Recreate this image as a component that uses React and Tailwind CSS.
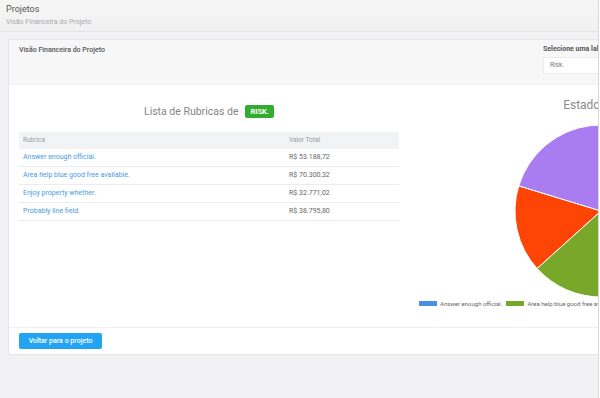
import React from 'react';

const rows = [
  { name: 'Answer enough official.', value: 'R$ 53.188,72' },
  { name: 'Area help blue good free available.', value: 'R$ 70.300,32' },
  { name: 'Enjoy property whether.', value: 'R$ 32.771,02' },
  { name: 'Probably line field.', value: 'R$ 38.795,80' },
];

const slices = [
  { from: 138, to: 197, color: '#ff4506' },
  { from: 197, to: 330, color: '#a97cf2' },
  { from: 330, to: 400, color: '#4a8fe2' },
  { from: 40, to: 138, color: '#79a72a' },
];

const arc = (cx, cy, r, a0, a1) => {
  const p = (a) => [cx + r * Math.cos((a * Math.PI) / 180), cy + r * Math.sin((a * Math.PI) / 180)];
  const [x0, y0] = p(a0);
  const [x1, y1] = p(a1);
  const large = a1 - a0 > 180 ? 1 : 0;
  return `M${cx} ${cy} L${x0} ${y0} A${r} ${r} 0 ${large} 1 ${x1} ${y1} Z`;
};

const Pie = () => (
  <svg width="174" height="174" viewBox="0 0 174 174" className="block">
    {slices.map((s, i) => (
      <path key={i} d={arc(87, 87, 86, s.from, s.to)} fill={s.color} stroke="#fff" strokeWidth="1" />
    ))}
  </svg>
);

export default function App() {
  return (
    <div className="flex w-[600px] h-[398px] overflow-hidden bg-[#f2f2f5] font-['Roboto',sans-serif]">
      <div className="w-[598px] shrink-0 overflow-hidden">
        <div className="h-[32px] bg-gradient-to-b from-[#f6f6f6] to-[#f1f1f1] border-b border-[#e4e4e6] px-[6px] pt-[3px]">
          <div className="text-[9px] text-[#555] leading-[12px]">Projetos</div>
          <div className="text-[7px] text-[#a9a9ae] leading-[10px] mt-[2px]">Visão Financeira do Projeto</div>
        </div>

        <div className="pt-[7px] pl-[8px]">
          <div className="w-[790px] bg-white border border-[#e6e6ea]">
            <div className="h-[45px] bg-[#f7f7f8] flex border-b border-[#f0f0f2]">
              <div className="flex-1 pl-[10px] pt-[5px] text-[7px] font-medium text-[#555]">Visão Financeira do Projeto</div>
              <div className="w-[244px] mr-[10px] pt-[4px]">
                <div className="text-[7px] font-bold text-[#555] leading-[10px]">Selecione uma label</div>
                <div className="mt-[3px] h-[17px] bg-white border border-[#ececef] flex items-center pl-[6px] text-[6.5px] text-[#777]">Risk.</div>
              </div>
            </div>

            <div className="h-[242px] flex pl-[10px]">
              <div className="w-[380px] shrink-0">
                <div className="h-[47px] flex items-center justify-center gap-[7px] pt-[6px]">
                  <span className="text-[10.5px] text-[#858585]">Lista de Rubricas de</span>
                  <span className="bg-[#33ad2f] text-white text-[7.5px] font-bold px-[5px] py-[2px] rounded-[2px] leading-[9px]">RISK.</span>
                </div>
                <div className="text-[7px]">
                  <div className="flex h-[17px] items-center bg-[#f2f3f5] text-[6.5px] text-[#9a9aa0]">
                    <div className="w-[266px] pl-[4px]">Rubrica</div>
                    <div className="pl-[4px]">Valor Total</div>
                  </div>
                  {rows.map((r) => (
                    <div key={r.name} className="flex h-[18px] items-center border-b border-[#ececee]">
                      <div className="w-[266px] pl-[4px] text-[#4a9be2]">{r.name}</div>
                      <div className="pl-[4px] text-[#666]">{r.value}</div>
                    </div>
                  ))}
                </div>
              </div>

              <div className="w-[384px] shrink-0 ml-[10px] flex flex-col items-center">
                <div className="pt-[13px] text-[12px] text-[#8a8a8a] leading-[14px] pl-[20px]">Estado Financeiro</div>
                <div className="mt-[12px]">
                  <Pie />
                </div>
                <div className="self-start pl-[10px] mt-[1px] flex items-center gap-[3px] text-[6px] text-[#666]">
                  <span className="w-[18px] h-[5px] bg-[#4a8fe2]" />
                  <span>Answer enough official.</span>
                  <span className="w-[18px] h-[5px] bg-[#79a72a] ml-[1px]" />
                  <span>Area help blue good free available.</span>
                </div>
              </div>
            </div>

            <div className="flex items-center border-t border-[#f0f0f2] py-[5px] pl-[10px]">
              <button className="w-[83px] h-[16px] bg-[#22a3f4] rounded-[2px] text-white text-[7px] font-medium leading-[16px]">Voltar para o projeto</button>
            </div>
          </div>
        </div>
      </div>
      <div className="w-[2px] shrink-0 bg-white border-l border-[#d8d8dc]" />
    </div>
  );
}
